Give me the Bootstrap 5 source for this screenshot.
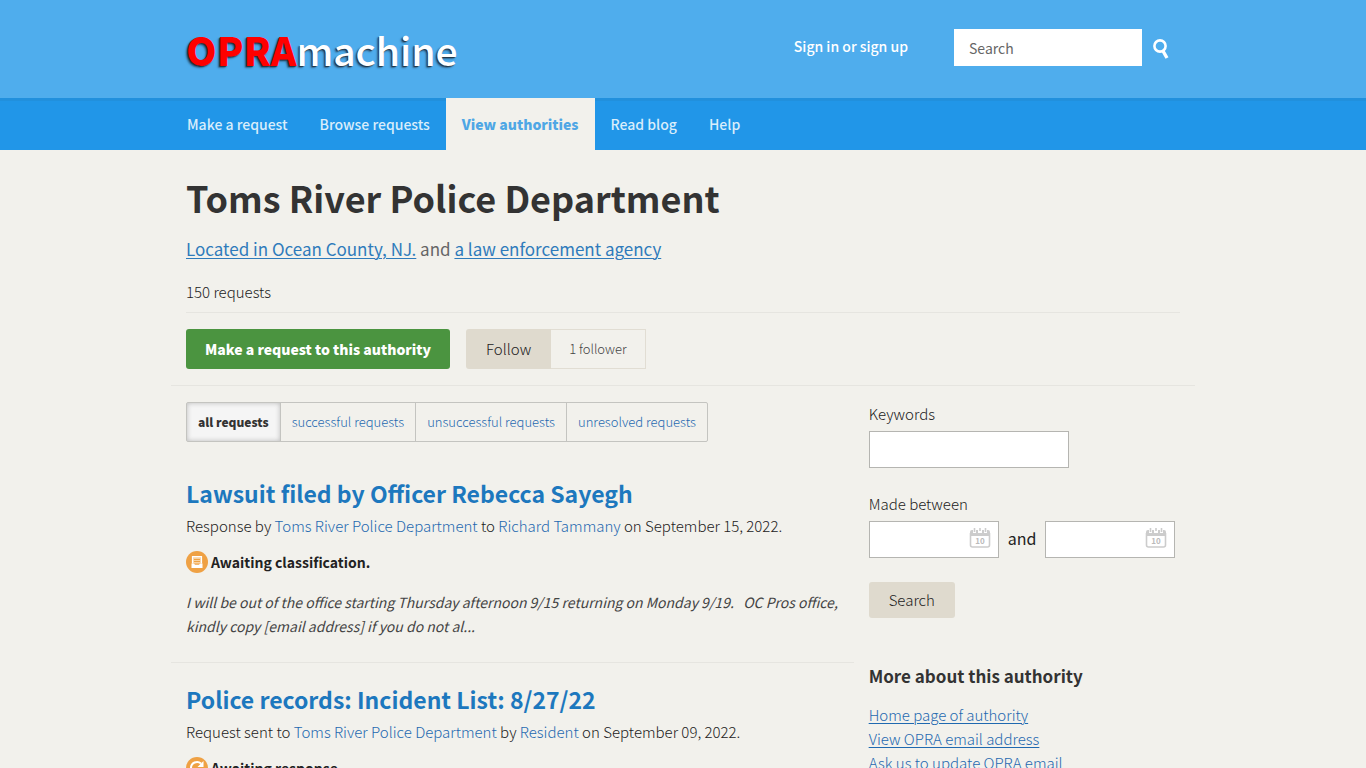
<!DOCTYPE html>
<html lang="en">
<head>
<meta charset="utf-8">
<meta name="viewport" content="width=device-width, initial-scale=1">
<title>Toms River Police Department - OPRAmachine</title>
<link href="https://cdn.jsdelivr.net/npm/bootstrap@5.3.0/dist/css/bootstrap.min.css" rel="stylesheet">
<style>
  body { font-family: "Noto Sans CJK SC", "Open Sans", sans-serif; font-size: 15px; line-height: 24px; font-weight: 300; color: #222; background: #f2f1ec; }
  a { color: #1f69b0; text-decoration: none; }
  .page-wrap { max-width: 1024px; padding: 0 15px; }
  .page-row { --bs-gutter-x: 30px; }
  .top-band { background: #4faded; min-height: 98px; }
  .brand-logo { font-size: 39px; line-height: 48px; font-weight: 500; color: #fff; text-shadow: -1px 1px 1px #234, -2px 2px 2px #2348; padding-top: 25px; }
  .brand-logo strong { color: #f00; font-weight: 900; }
  .top-form { padding-top: 29px; }
  .sign-link { color: #fff; font-size: 14px; font-weight: 500; line-height: 34px; margin-right: 46px; }
  .top-search { width: 188px; height: 37px; border: 0; border-radius: 0; padding: 0 15px; font-size: 14px; box-shadow: none; }
  .top-search::placeholder { color: #666; }
  .find-btn { width: 38px; height: 37px; border: 0; background: none; padding: 0; }
  .main-nav { background: #2196e8; box-shadow: inset 0 3px 0 #2190dd; }
  .main-nav .nav-link { color: #d9edfb; padding: 14px 16px; font-size: 14px; line-height: 24px; font-weight: 500; }
  .main-nav .nav-link.active { background: #f2f1ec; color: #4fa7e5; font-weight: 900; }
  .main-nav .nav { margin-left: -15px; }
  h1 { font-size: 36px; line-height: 48px; font-weight: 700; margin: 23px 0 16px; color: #333; }
  .tags-line { font-size: 17px; font-weight: 400; color: #666; margin-bottom: 19px; }
  .tags-line a { color: #2f7bbb; }
  .tags-line a, .more-list a { text-decoration: underline; text-underline-offset: 2px; text-decoration-thickness: 1px; }
  .count-line { margin-bottom: 8px; }
  .thin-rule { border-top: 1px solid #e6e5e0; }
  .wide-rule { margin: 16px -15px; }
  .make-btn { background: #4b9440; color: #fff; font-weight: 900; font-size: 14px; height: 40px; line-height: 38px; padding: 0 18px; border-radius: 3px; }
  .follow-btn, .find2-btn { background: #dfdace; color: #222; font-size: 15px; font-weight: 300; border: 0; padding: 0 20px; height: 40px; }
  .follow-btn { border-radius: 3px 0 0 3px; }
  .find2-btn { border-radius: 3px; height: 36px; }
  .follow-count { font-size: 13px; color: #444; border: 1px solid #e1ddd3; border-left: 0; height: 40px; line-height: 38px; padding: 0 18px; }
  .filter-bar { border: 1px solid #c4c4c0; border-radius: 2px; font-size: 13px; line-height: 38px; }
  .filter-bar > * { padding: 0 11px; border-left: 1px solid #c4c4c0; }
  .filter-bar > :first-child { border-left: 0; font-size: 12px; font-weight: 900; color: #333; background: #f5f5f5; box-shadow: inset 0 0 5px #bbb; }
  .result { border-bottom: 1px solid #e6e5e0; padding: 21px 15px 24px; margin: 0 -15px; }
  .result.first-result { padding-top: 36px; }
  .result h2 { font-size: 23px; line-height: 30px; font-weight: 700; margin: 0 0 6px; }
  .result h2 a { color: #1d78be; }
  .result .status { margin: 12px 0 16px; font-size: 14px; font-weight: 700; gap: 3px; }
  .result em { font-size: 14px; font-weight: 400; color: #444; }
  .side label { display: block; margin-bottom: 5px; }
  .side .form-control { height: 37px; border: 1px solid #b5b5b1; border-radius: 0; box-shadow: none; padding: 0 8px; font-size: 14px; }
  .word-box { width: 200px; }
  .date-box { width: 130px; }
  .date-box svg { right: 8px; top: 6px; }
  .and-word { font-size: 16px; font-weight: 400; padding: 0 9px 4px; }
  .side h2 { font-size: 17px; line-height: 24px; font-weight: 700; margin: 0 0 15px; color: #333; }
  .more-box { margin-top: 46px; }
</style>
</head>
<body>
<header>
  <div class="top-band">
    <div class="container-fluid page-wrap d-flex justify-content-between align-items-start">
      <a href="#" class="brand-logo"><strong>OPRA</strong>machine</a>
      <form class="d-flex top-form">
        <a href="#" class="sign-link">Sign in or sign up</a>
        <input type="search" class="form-control top-search" placeholder="Search" aria-label="Search">
        <button type="button" class="find-btn" aria-label="Submit search">
          <svg width="18" height="22" viewBox="0 0 18 22" fill="none" stroke="#fff"><circle cx="8" cy="8" r="5.6" stroke-width="2.6"/><path d="M11 13l4 7" stroke-width="3.4"/></svg>
        </button>
      </form>
    </div>
  </div>
  <div class="main-nav">
    <div class="container-fluid page-wrap">
      <nav class="nav">
        <a class="nav-link" href="#">Make a request</a>
        <a class="nav-link" href="#">Browse requests</a>
        <a class="nav-link active" href="#">View authorities</a>
        <a class="nav-link" href="#">Read blog</a>
        <a class="nav-link" href="#">Help</a>
      </nav>
    </div>
  </div>
</header>
<main class="container-fluid page-wrap">
  <h1>Toms River Police Department</h1>
  <p class="tags-line"><a href="#">Located in Ocean County, NJ.</a> and <a href="#">a law enforcement agency</a></p>
  <p class="count-line">150 requests</p>
  <div class="thin-rule mb-3"></div>
  <div class="d-flex">
    <button type="button" class="btn make-btn me-3">Make a request to this authority</button>
    <button type="button" class="follow-btn">Follow</button>
    <span class="follow-count">1 follower</span>
  </div>
  <div class="thin-rule wide-rule"></div>
  <div class="row page-row">
    <div class="col-8">
      <div class="filter-bar d-inline-flex">
        <span>all requests</span><a href="#">successful requests</a><a href="#">unsuccessful requests</a><a href="#">unresolved requests</a>
      </div>
      <article class="result first-result">
        <h2><a href="#">Lawsuit filed by Officer Rebecca Sayegh</a></h2>
        <div>Response by <a href="#">Toms River Police Department</a> to <a href="#">Richard Tammany</a> on September 15, 2022.</div>
        <div class="status d-flex align-items-center">
          <svg width="22" height="22" viewBox="0 0 22 22"><circle cx="11" cy="11" r="11" fill="#efa144"/><path d="M6.500 12.500V5.600h9v6.900" fill="#f8d3a4" stroke="#fff" stroke-width="1.200"/><path d="M8 8.500h6M8 10.500h6" stroke="#efa144"/><path d="M5.500 12.500H8l1 1.200h4l1-1.200h2.500V17h-11z" fill="#fff"/></svg>
          Awaiting classification.
        </div>
        <em class="d-block">I will be out of the office starting Thursday afternoon 9/15 returning on Monday 9/19. &nbsp; OC Pros office, kindly copy [email address] if you do not al...</em>
      </article>
      <article class="result">
        <h2><a href="#">Police records: Incident List: 8/27/22</a></h2>
        <div>Request sent to <a href="#">Toms River Police Department</a> by <a href="#">Resident</a> on September 09, 2022.</div>
        <div class="status d-flex align-items-center">
          <svg width="22" height="22" viewBox="0 0 22 22"><circle cx="11" cy="11" r="11" fill="#efa144"/><path d="M5 11a6 6 0 0 1 10-4.500" fill="none" stroke="#fff" stroke-width="2"/><path d="M17.500 4v6h-6z" fill="#fff"/><path d="M17 12a6 6 0 0 1-10 3.500" fill="none" stroke="#fff" stroke-width="2"/></svg>
          Awaiting response.
        </div>
      </article>
    </div>
    <div class="col-4 side">
      <form>
        <label for="words">Keywords</label>
        <input id="words" type="text" class="form-control word-box">
        <label for="from" class="mt-4">Made between</label>
        <div class="d-flex align-items-center">
          <div class="date-box position-relative"><input id="from" type="text" class="form-control">
            <svg class="position-absolute" width="22" height="22" viewBox="0 0 22 22"><path d="M1.500 6v12a2 2 0 0 0 2 2h15a2 2 0 0 0 2-2V6" fill="none" stroke="#ccc" stroke-width="1.600"/><path d="M1 9V5q0-2 2-2h1v3h3V3h2v3h4V3h2v3h3V3h1q2 0 2 2v4z" fill="#ccc"/><path d="M5.500 1v4M16.500 1v4M11 1v3" stroke="#ccc" stroke-width="1.600"/><text x="11" y="17" text-anchor="middle" font-size="8" font-weight="700" fill="#bbb">10</text></svg>
          </div>
          <label for="to" class="and-word mb-0">and</label>
          <div class="date-box position-relative"><input id="to" type="text" class="form-control">
            <svg class="position-absolute" width="22" height="22" viewBox="0 0 22 22"><path d="M1.500 6v12a2 2 0 0 0 2 2h15a2 2 0 0 0 2-2V6" fill="none" stroke="#ccc" stroke-width="1.600"/><path d="M1 9V5q0-2 2-2h1v3h3V3h2v3h4V3h2v3h3V3h1q2 0 2 2v4z" fill="#ccc"/><path d="M5.500 1v4M16.500 1v4M11 1v3" stroke="#ccc" stroke-width="1.600"/><text x="11" y="17" text-anchor="middle" font-size="8" font-weight="700" fill="#bbb">10</text></svg>
          </div>
        </div>
        <button type="button" class="find2-btn mt-4">Search</button>
      </form>
      <section class="more-box">
        <h2>More about this authority</h2>
        <div class="more-list d-flex flex-column align-items-start">
          <a href="#">Home page of authority</a>
          <a href="#">View OPRA email address</a>
          <a href="#">Ask us to update OPRA email</a>
        </div>
      </section>
    </div>
  </div>
</main>
<script src="https://cdn.jsdelivr.net/npm/bootstrap@5.3.0/dist/js/bootstrap.bundle.min.js"></script>
</body>
</html>
